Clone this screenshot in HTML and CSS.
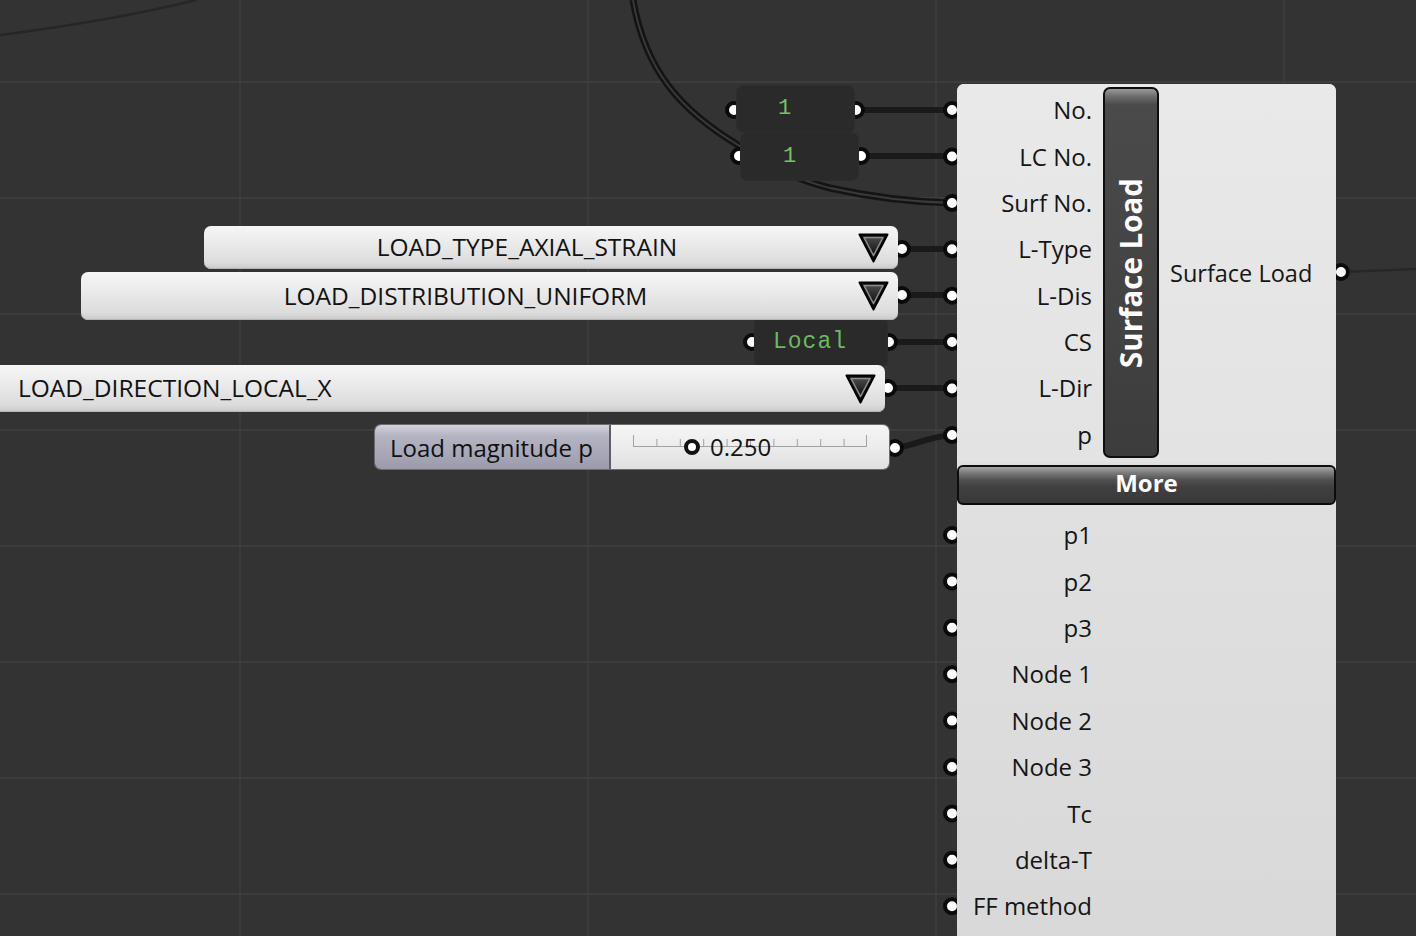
FILE: index.html
```html
<!DOCTYPE html>
<html lang="en">
<head>
<meta charset="utf-8">
<title>Surface Load</title>
<link rel="stylesheet" href="styles.css">
</head>
<body>
<div class="canvas">
  <svg class="wires" width="1416" height="936" viewBox="0 0 1416 936">
    <path class="wire-thin" d="M0,35 C70,26 140,14 196,0"/>
    <path class="wire-double-outer" d="M633,0 C645,70 680,110 738,145 C770,165 790,178 830,188 C870,197 910,202 953,203"/>
    <path class="wire-double-inner" d="M633,0 C645,70 680,110 738,145 C770,165 790,178 830,188 C870,197 910,202 953,203"/>
    <path class="wire" d="M855,110 L953,110"/>
    <path class="wire" d="M860,156 L953,156"/>
    <path class="wire" d="M902,249 L953,249"/>
    <path class="wire" d="M902,295 L953,295"/>
    <path class="wire" d="M889,342 L953,342"/>
    <path class="wire" d="M888,388 L953,388"/>
    <path class="wire" d="M895,448 C915,446 925,437 953,435"/>
    <path class="wire-out" d="M1340,272 C1370,271 1390,270 1416,269"/>

    <g class="grip">
      <circle cx="734" cy="110" r="7"/>
      <circle cx="856" cy="110" r="7"/>
      <circle cx="739" cy="156" r="7"/>
      <circle cx="861" cy="156" r="7"/>
      <circle cx="902" cy="249" r="7"/>
      <circle cx="902" cy="295" r="7"/>
      <circle cx="752" cy="342" r="7"/>
      <circle cx="889" cy="342" r="7"/>
      <circle cx="888" cy="388" r="7"/>
      <circle cx="895" cy="448" r="7"/>
      <circle cx="952" cy="110" r="7"/>
      <circle cx="952" cy="156.5" r="7"/>
      <circle cx="952" cy="203" r="7"/>
      <circle cx="952" cy="249.3" r="7"/>
      <circle cx="952" cy="295.7" r="7"/>
      <circle cx="952" cy="342" r="7"/>
      <circle cx="952" cy="388.5" r="7"/>
      <circle cx="952" cy="435" r="7"/>
      <circle cx="952" cy="535" r="7"/>
      <circle cx="952" cy="581.4" r="7"/>
      <circle cx="952" cy="627.8" r="7"/>
      <circle cx="952" cy="674.2" r="7"/>
      <circle cx="952" cy="720.6" r="7"/>
      <circle cx="952" cy="767" r="7"/>
      <circle cx="952" cy="813.4" r="7"/>
      <circle cx="952" cy="859.8" r="7"/>
      <circle cx="952" cy="906.2" r="7"/>
      <circle cx="1341" cy="272" r="7"/>
    </g>
  </svg>

  <div class="panel panel-1"><span class="panel-text">1</span></div>
  <div class="panel panel-2"><span class="panel-text">1</span></div>
  <div class="panel panel-local"><span class="panel-text">Local</span></div>

  <div class="dropdown dd-type">
    <span class="dd-text">LOAD_TYPE_AXIAL_STRAIN</span>
    <svg class="dd-arrow" width="31" height="30" viewBox="0 0 31 30">
      <defs>
        <linearGradient id="tri" x1="0" y1="0" x2="0" y2="1">
          <stop offset="0" stop-color="#4a4a4a"/>
          <stop offset="1" stop-color="#0c0c0c"/>
        </linearGradient>
      </defs>
      <polygon points="1.5,1.5 29.5,1.5 15.5,28.5" fill="#111" stroke="#000" stroke-width="2" stroke-linejoin="round"/>
      <polygon points="6,4.5 25,4.5 15.5,22.5" fill="url(#tri)" stroke="#8c8c8c" stroke-width="1.6" stroke-linejoin="round"/>
    </svg>
  </div>
  <div class="dropdown dd-dist">
    <span class="dd-text">LOAD_DISTRIBUTION_UNIFORM</span>
    <svg class="dd-arrow" width="31" height="30" viewBox="0 0 31 30">
      <polygon points="1.5,1.5 29.5,1.5 15.5,28.5" fill="#111" stroke="#000" stroke-width="2" stroke-linejoin="round"/>
      <polygon points="6,4.5 25,4.5 15.5,22.5" fill="url(#tri)" stroke="#8c8c8c" stroke-width="1.6" stroke-linejoin="round"/>
    </svg>
  </div>
  <div class="dropdown dd-dir">
    <span class="dd-text dd-left">LOAD_DIRECTION_LOCAL_X</span>
    <svg class="dd-arrow" width="31" height="30" viewBox="0 0 31 30">
      <polygon points="1.5,1.5 29.5,1.5 15.5,28.5" fill="#111" stroke="#000" stroke-width="2" stroke-linejoin="round"/>
      <polygon points="6,4.5 25,4.5 15.5,22.5" fill="url(#tri)" stroke="#8c8c8c" stroke-width="1.6" stroke-linejoin="round"/>
    </svg>
  </div>

  <div class="slider">
    <div class="sl-label">Load magnitude p</div>
    <div class="sl-track">
      <svg class="sl-scale" width="277" height="43" viewBox="0 0 277 43">
        <path d="M22,21.5 H256 M22.5,10 V21 M45.9,14 V21 M69.3,14 V21 M92.7,14 V21 M116.1,14 V21 M139.5,14 V21 M162.9,14 V21 M186.3,14 V21 M209.7,14 V21 M233.1,14 V21 M255.5,10 V21" stroke="#a2a2a2" stroke-width="1" fill="none"/>
      </svg>
      <span class="knob"></span>
      <span class="sl-value">0.250</span>
    </div>
  </div>

  <div class="component">
    <div class="comp-top">
      <div class="inputs">
        <div class="row">No.</div>
        <div class="row">LC No.</div>
        <div class="row">Surf No.</div>
        <div class="row">L-Type</div>
        <div class="row">L-Dis</div>
        <div class="row">CS</div>
        <div class="row">L-Dir</div>
        <div class="row">p</div>
      </div>
      <div class="name-bar"><span class="name-text">Surface Load</span></div>
      <div class="outputs"><span>Surface Load</span></div>
    </div>
    <div class="more">More</div>
    <div class="comp-bottom">
      <div class="inputs">
        <div class="row">p1</div>
        <div class="row">p2</div>
        <div class="row">p3</div>
        <div class="row">Node 1</div>
        <div class="row">Node 2</div>
        <div class="row">Node 3</div>
        <div class="row">Tc</div>
        <div class="row">delta-T</div>
        <div class="row">FF method</div>
      </div>
    </div>
  </div>
</div>
</body>
</html>
```

FILE: styles.css
```css
html, body {
  margin: 0;
  padding: 0;
  background: #333333;
  overflow: hidden;
}

.canvas {
  position: relative;
  width: 1416px;
  height: 936px;
  overflow: hidden;
  background-color: #333333;
  background-image:
    linear-gradient(to bottom, #3d3d3d 0, #3d3d3d 2px, transparent 2px),
    linear-gradient(to right, #3b3b3b 0, #3b3b3b 2px, transparent 2px);
  background-size: 100% 116px, 348px 100%;
  background-position: 0 81px, 239px 0;
  font-family: "Open Sans", "Noto Sans", sans-serif;
  color: #151515;
}

.wires {
  position: absolute;
  left: 0;
  top: 0;
}

.wire {
  stroke: #1a1a1a;
  stroke-width: 6;
  fill: none;
}

.wire-thin {
  stroke: #262626;
  stroke-width: 2.5;
  fill: none;
}

.wire-out {
  stroke: #272727;
  stroke-width: 2.5;
  fill: none;
}

.wire-double-outer {
  stroke: #141414;
  stroke-width: 7;
  fill: none;
}

.wire-double-inner {
  stroke: #3a3a3a;
  stroke-width: 1.8;
  fill: none;
}

.grip circle {
  fill: #ffffff;
  stroke: #0a0a0a;
  stroke-width: 4;
}

/* number / text panels */
.panel {
  position: absolute;
  background: #2a2a2a;
  border-radius: 7px;
  display: flex;
  align-items: center;
  box-shadow: 0 0 0 1px #2d2d2d;
}

.panel-text {
  font-family: "Liberation Mono", "DejaVu Sans Mono", monospace;
  font-size: 22px;
  color: #74c465;
  line-height: 1;
}

.panel-1 {
  left: 737px;
  top: 86px;
  width: 117px;
  height: 46px;
  padding-left: 41px;
  box-sizing: border-box;
}

.panel-2 {
  left: 741px;
  top: 133px;
  width: 117px;
  height: 47px;
  padding-left: 42px;
  box-sizing: border-box;
}

.panel-local {
  left: 755px;
  top: 318px;
  width: 132px;
  height: 48px;
  padding-left: 18px;
  box-sizing: border-box;
}

.panel-local .panel-text {
  font-size: 23px;
  letter-spacing: 1px;
  color: #6fb85f;
}

/* value list dropdowns */
.dropdown {
  position: absolute;
  display: flex;
  align-items: center;
  box-sizing: border-box;
  border-radius: 7px;
  background: linear-gradient(to bottom, #f6f6f6 0%, #ececec 35%, #dcdcdc 85%, #c9c9c9 100%);
  box-shadow: inset 0 -1px 0 #b5b5b5;
  padding-right: 9px;
}

.dd-text {
  flex: 1;
  text-align: center;
  font-size: 24.5px;
  line-height: 1;
  white-space: nowrap;
  color: #121212;
}

.dd-left {
  text-align: left;
  padding-left: 28px;
}

.dd-arrow {
  flex: none;
  display: block;
}

.dd-type {
  left: 204px;
  top: 226px;
  width: 694px;
  height: 43px;
}

.dd-type .dd-text {
  padding-right: 8px;
}

.dd-dist {
  left: 81px;
  top: 272px;
  width: 817px;
  height: 48px;
}

.dd-dist .dd-text {
  padding-right: 8px;
}

.dd-dir {
  left: -10px;
  top: 365px;
  width: 895px;
  height: 47px;
}

/* number slider */
.slider {
  position: absolute;
  left: 375px;
  top: 425px;
  width: 514px;
  height: 44px;
  display: flex;
  border-radius: 6px;
  overflow: hidden;
  box-shadow: 0 0 0 1px #6c6c6c;
}

.sl-label {
  width: 236px;
  flex: none;
  display: flex;
  align-items: center;
  padding-left: 15px;
  box-sizing: border-box;
  font-size: 24px;
  color: #111;
  background: linear-gradient(to bottom, #d4d4de 0%, #b3b3c2 25%, #a6a6b6 70%, #9a9aaa 100%);
  border-right: 2px solid #5e5e66;
}

.sl-track {
  position: relative;
  flex: 1;
  display: flex;
  align-items: center;
  padding-left: 73px;
  background: linear-gradient(to bottom, #f5f5f5 0%, #ececec 50%, #e0e0e0 100%);
}

.sl-scale {
  position: absolute;
  left: 0;
  top: 0;
}

.knob {
  position: relative;
  width: 8px;
  height: 8px;
  border: 4px solid #111;
  border-radius: 50%;
  background: #fff;
  flex: none;
}

.sl-value {
  position: relative;
  margin-left: 10px;
  font-size: 24px;
  line-height: 1;
  color: #141414;
}

/* component */
.component {
  position: absolute;
  left: 957px;
  top: 84px;
  width: 379px;
  height: 880px;
  background: #dfdfdf;
  border-radius: 7px 7px 0 0;
  display: flex;
  flex-direction: column;
}

.comp-top {
  height: 378px;
  box-sizing: border-box;
  padding: 3px 0 4px;
  display: flex;
  background: linear-gradient(to bottom, #e9e9e9, #e3e3e3);
  border-radius: 7px 7px 0 0;
}

.inputs {
  width: 146px;
  flex: none;
  display: flex;
  flex-direction: column;
}

.row {
  height: 46.4px;
  display: flex;
  align-items: center;
  justify-content: flex-end;
  padding-right: 11px;
  font-size: 24px;
  line-height: 1;
  white-space: nowrap;
  color: #151515;
}

.name-bar {
  width: 56px;
  flex: none;
  box-sizing: border-box;
  border: 2px solid #0e0e0e;
  border-radius: 7px;
  background: linear-gradient(to bottom, #9a9a9a 0px, #6a6a6a 8px, #4a4a4a 16px, #434343 60%, #3c3c3c 100%);
  display: flex;
  align-items: center;
  justify-content: center;
}

.name-text {
  writing-mode: vertical-rl;
  transform: rotate(180deg);
  font-weight: 700;
  font-size: 29.5px;
  line-height: 1;
  color: #ffffff;
  white-space: nowrap;
}

.outputs {
  flex: 1;
  display: flex;
  align-items: center;
  padding-left: 11px;
  font-size: 23.5px;
  color: #151515;
  white-space: nowrap;
}

.more {
  height: 40px;
  margin-top: 3px;
  box-sizing: border-box;
  border: 2px solid #0c0c0c;
  border-radius: 6px;
  background: linear-gradient(to bottom, #a6a6a6 0px, #7a7a7a 6px, #505050 13px, #404040 55%, #383838 100%);
  display: flex;
  align-items: center;
  justify-content: center;
  padding-bottom: 4px;
  font-weight: 700;
  font-size: 24px;
  line-height: 1;
  color: #ffffff;
}

.comp-bottom {
  flex: 1;
  padding-top: 7px;
  background: linear-gradient(to bottom, #e0e0e0, #d8d8d8);
}
```
